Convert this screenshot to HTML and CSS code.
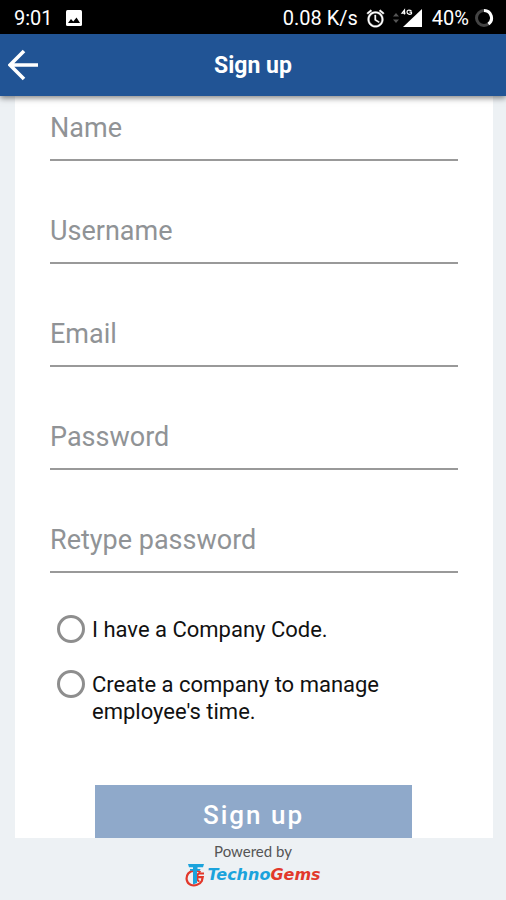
FILE: index.html
```html
<!DOCTYPE html>
<html lang="en">
<head>
<meta charset="utf-8">
<meta name="viewport" content="width=device-width, initial-scale=1">
<title>Sign up</title>
<link rel="stylesheet" href="styles.css">
</head>
<body>
<div class="status">
  <span class="time">9:01</span>
  <svg class="photo" width="18" height="18" viewBox="0 0 18 18" aria-hidden="true"><rect x="1" y="1" width="16" height="16" rx="1.5" fill="#fff"/><path d="M3 14l3-4 2.300 2.600 3.200-4.100L15 14z" fill="#000"/></svg>
  <span class="speed">0.08 K/s</span>
  <svg class="alarm" width="21" height="21" viewBox="0 0 24 24" aria-hidden="true"><path fill="#fff" stroke="#fff" stroke-width=".4" d="M22 5.720l-4.600-3.860-1.290 1.530 4.600 3.860L22 5.720zM7.880 3.390L6.600 1.860 2 5.710l1.290 1.530 4.590-3.850zM12.500 8H11v6l4.750 2.850.750-1.230-4-2.370V8zM12 4c-4.970 0-9 4.030-9 9s4.020 9 9 9 9-4.030 9-9-4.030-9-9-9zm0 16c-3.870 0-7-3.130-7-7s3.130-7 7-7 7 3.130 7 7-3.130 7-7 7z"/></svg>
  <svg class="signal" width="32" height="20" viewBox="0 0 32 20" aria-hidden="true"><path d="M2 8.500l3-3.500 3 3.500zM2 11.500l3 3.500 3-3.500z" fill="#555"/><path d="M31 1v18H12z" fill="#fff"/><path d="M13.500 6.500V2L11 5.200h3.500M20.500 2.800c-3-1.500-4.500-.3-4.500 1.200 0 2.500 3 2.700 4.500 1.700V4.200h-2" fill="none" stroke="#fff" stroke-width="1.200"/></svg>
  <span class="percent">40%</span>
  <svg class="battery" width="20" height="20" viewBox="0 0 20 20" aria-hidden="true"><circle cx="10" cy="10" r="7.500" fill="none" stroke="#444" stroke-width="3"/><path d="M10 2.500a7.500 7.500 0 0 1 4.400 13.570" fill="none" stroke="#fff" stroke-width="3"/></svg>
</div>
<header class="bar">
  <button class="back" type="button" aria-label="Back"><svg width="32" height="32" viewBox="0 0 32 32" aria-hidden="true"><path d="M30 16H2M16 2L2 16l14 14" fill="none" stroke="#fff" stroke-width="3.600"/></svg></button>
  <h1>Sign up</h1>
</header>
<main class="scroll">
  <form class="card">
    <input class="field" type="text" placeholder="Name" aria-label="Name">
    <input class="field" type="text" placeholder="Username" aria-label="Username">
    <input class="field" type="email" placeholder="Email" aria-label="Email">
    <input class="field" type="password" placeholder="Password" aria-label="Password">
    <input class="field" type="password" placeholder="Retype password" aria-label="Retype password">
    <div class="choices">
      <label class="choice"><input type="radio" name="company"><span>I have a Company Code.</span></label>
      <label class="choice"><input type="radio" name="company"><span>Create a company to manage employee's time.</span></label>
    </div>
    <button class="submit" type="submit">Sign up</button>
  </form>
</main>
<footer class="footer">
  <span class="powered">Powered by</span>
  <div class="brand">
    <svg width="20" height="24" viewBox="0 0 20 24" aria-hidden="true"><path d="M15.500 9.300C12 6.500 6 7 3.200 10.500.300 14.500 1.500 20 5.500 21.700c4.200 1.700 9.500-.2 11.300-3.700l.9-3.800h-5" fill="none" stroke="#e2382b" stroke-width="2.200"/><path d="M19 10.500h-4.500c-1.700 0-2 1-2 2.500v3c0 1.500.5 2.200 2 2.200" fill="none" stroke="#e2382b" stroke-width="1.800"/><path d="M3 1h16l-1 3.200h-5.500V6h3l-.5 1.800h-3V20L8 21.500V7.800H5V6h3V4.200H4z" fill="#1ba3dc"/></svg>
    <span class="wordmark">Techno<span class="gems">Gems</span></span>
  </div>
</footer>
</body>
</html>
```

FILE: styles.css
```css
* { box-sizing: border-box; }

body {
  margin: 0;
  height: 100vh;
  display: flex;
  flex-direction: column;
  background: #edf1f4;
  font-family: Roboto, "Liberation Sans", sans-serif;
}

.status {
  flex: none;
  height: 34px;
  padding: 2px 12px 0 14px;
  display: flex;
  align-items: center;
  background: #000;
  color: #fff;
  font-size: 20px;
}

.status svg { flex: none; }
.time { margin-right: 12px; }
.speed { margin-left: auto; }
.alarm { margin-left: 7px; }
.signal { margin-left: 5px; }
.percent { margin: 0 5px 0 9px; }

.bar {
  flex: none;
  position: relative;
  height: 62px;
  padding: 0 8px;
  display: grid;
  grid-template-columns: 32px 1fr 32px;
  align-items: center;
  background: #215495;
  color: #fff;
  box-shadow: 0 2px 6px rgba(0, 0, 0, 0.5);
}

.back {
  display: flex;
  padding: 0;
  border: 0;
  background: none;
}

h1 {
  margin: 0;
  font-size: 23px;
  font-weight: 700;
  text-align: center;
}

.scroll {
  flex: 1;
  min-height: 0;
  padding: 0 13px 0 15px;
  overflow: hidden;
}

.card {
  padding: 16px 35px 24px;
  display: flex;
  flex-direction: column;
  background: #fff;
}

.field {
  width: 100%;
  height: 49px;
  margin-bottom: 54px;
  padding: 0 0 15px;
  border: 0;
  border-bottom: 2px solid #999;
  background: none;
  color: #222;
  font: 27px/32px Roboto, "Liberation Sans", sans-serif;
  outline: 0;
}

.field::placeholder { color: #909396; opacity: 1; }
.field:last-of-type { margin-bottom: 42px; }

.choices {
  padding: 0 36px 0 7px;
  display: flex;
  flex-direction: column;
  gap: 27px;
}

.choice {
  display: flex;
  gap: 7px;
  color: #111;
  font-size: 22px;
  line-height: 27px;
}

.choice span { padding-top: 1px; }

.choice input {
  appearance: none;
  flex: none;
  width: 28px;
  height: 28px;
  margin: 0;
  border: 3px solid #8e8e8e;
  border-radius: 50%;
}

.submit {
  height: 60px;
  margin: 60px 46px 0 45px;
  border: 0;
  background: #8fa9ca;
  color: #fff;
  font: 500 26px/32px Roboto, "Liberation Sans", sans-serif;
  letter-spacing: 2px;
}

.footer {
  flex: none;
  height: 62px;
  padding-top: 3px;
  display: flex;
  flex-direction: column;
  align-items: center;
  gap: 2px;
}

.powered {
  color: #555;
  font: 15px/20px Lato, sans-serif;
}

.brand {
  display: flex;
  align-items: center;
  gap: 2px;
}

.wordmark {
  color: #1ba3dc;
  font: italic 700 16px/24px "DejaVu Sans", sans-serif;
}

.gems { color: #e2382b; }
```
